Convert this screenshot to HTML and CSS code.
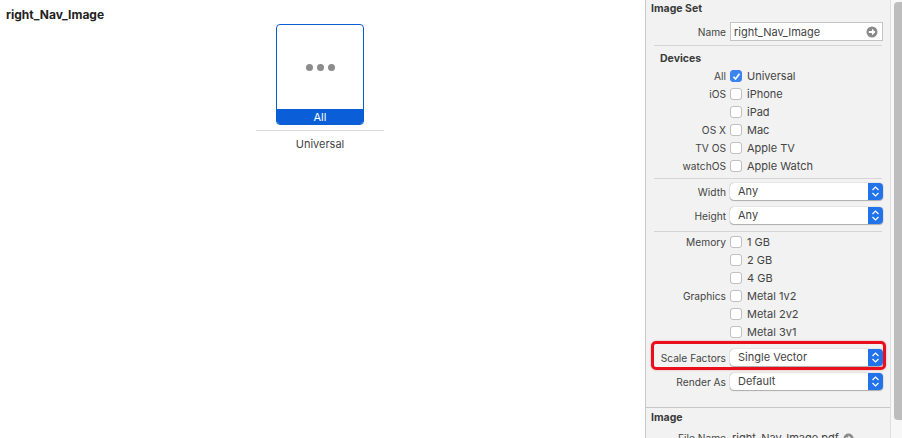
FILE: index.html
```html
<!DOCTYPE html>
<html lang="en">
<head>
    <meta charset="UTF-8">
    <meta name="viewport" content="width=device-width, initial-scale=1.0">
    <title>right_Nav_Image</title>
    <link rel="stylesheet" href="styles.css">
</head>
<body>
    <div class="canvas">
        <h1 class="set-title">right_Nav_Image</h1>
        <div class="slot-group">
            <div class="slot">
                <div class="slot-well">
                    <span class="dot"></span><span class="dot"></span><span class="dot"></span>
                </div>
                <div class="slot-tag">All</div>
            </div>
            <div class="slot-rule"></div>
            <div class="slot-name">Universal</div>
        </div>
    </div>

    <div class="inspector">
        <div class="panel">
            <h2 class="panel-title">Image Set</h2>
            <div class="row name-row">
                <span class="label">Name</span>
                <div class="text-field">
                    <span>right_Nav_Image</span>
                    <svg class="go-icon" width="12" height="12" viewBox="0 0 12 12">
                        <circle cx="6" cy="6" r="5.5" fill="#8a8a8a"/>
                        <path d="M2.8 5h3.2V2.8L9.4 6 6 9.2V7H2.8z" fill="#fff"/>
                    </svg>
                </div>
            </div>
            <hr class="rule">

            <h3 class="group-title">Devices</h3>
            <div class="row check-row first-check">
                <span class="label">All</span>
                <span class="check checked">
                    <svg width="9" height="9" viewBox="0 0 9 9"><path d="M1.5 4.8l2 2.2 4-5.2" fill="none" stroke="#fff" stroke-width="1.6"/></svg>
                </span>
                <span class="check-text">Universal</span>
            </div>
            <div class="row check-row"><span class="label">iOS</span><span class="check"></span><span class="check-text">iPhone</span></div>
            <div class="row check-row"><span class="label"></span><span class="check"></span><span class="check-text">iPad</span></div>
            <div class="row check-row"><span class="label">OS X</span><span class="check"></span><span class="check-text">Mac</span></div>
            <div class="row check-row"><span class="label">TV OS</span><span class="check"></span><span class="check-text">Apple TV</span></div>
            <div class="row check-row"><span class="label">watchOS</span><span class="check"></span><span class="check-text">Apple Watch</span></div>
            <hr class="rule rule-devices">

            <div class="row select-row">
                <span class="label">Width</span>
                <div class="select"><span class="select-value">Any</span><span class="stepper"><svg width="9" height="13" viewBox="0 0 9 13"><path d="M1.5 5L4.5 2l3 3M1.5 8l3 3 3-3" fill="none" stroke="#fff" stroke-width="1.2"/></svg></span></div>
            </div>
            <div class="row select-row gap-row">
                <span class="label">Height</span>
                <div class="select"><span class="select-value">Any</span><span class="stepper"><svg width="9" height="13" viewBox="0 0 9 13"><path d="M1.5 5L4.5 2l3 3M1.5 8l3 3 3-3" fill="none" stroke="#fff" stroke-width="1.2"/></svg></span></div>
            </div>
            <hr class="rule rule-size">

            <div class="row check-row first-memory"><span class="label">Memory</span><span class="check"></span><span class="check-text">1 GB</span></div>
            <div class="row check-row"><span class="label"></span><span class="check"></span><span class="check-text">2 GB</span></div>
            <div class="row check-row"><span class="label"></span><span class="check"></span><span class="check-text">4 GB</span></div>
            <div class="row check-row"><span class="label">Graphics</span><span class="check"></span><span class="check-text">Metal 1v2</span></div>
            <div class="row check-row"><span class="label"></span><span class="check"></span><span class="check-text">Metal 2v2</span></div>
            <div class="row check-row"><span class="label"></span><span class="check"></span><span class="check-text">Metal 3v1</span></div>

            <div class="row select-row scale-row">
                <span class="label">Scale Factors</span>
                <div class="select"><span class="select-value">Single Vector</span><span class="stepper"><svg width="9" height="13" viewBox="0 0 9 13"><path d="M1.5 5L4.5 2l3 3M1.5 8l3 3 3-3" fill="none" stroke="#fff" stroke-width="1.2"/></svg></span></div>
                <div class="callout"></div>
            </div>
            <div class="row select-row gap-row">
                <span class="label">Render As</span>
                <div class="select"><span class="select-value">Default</span><span class="stepper"><svg width="9" height="13" viewBox="0 0 9 13"><path d="M1.5 5L4.5 2l3 3M1.5 8l3 3 3-3" fill="none" stroke="#fff" stroke-width="1.2"/></svg></span></div>
            </div>

            <div class="image-section">
                <h2 class="panel-title">Image</h2>
                <div class="row file-row">
                    <span class="label">File Name</span>
                    <span class="file-name">right_Nav_Image.pdf</span>
                    <svg class="go-icon" width="11" height="11" viewBox="0 0 12 12">
                        <circle cx="6" cy="6" r="5.5" fill="#8a8a8a"/>
                        <path d="M2.8 5h3.2V2.8L9.4 6 6 9.2V7H2.8z" fill="#fff"/>
                    </svg>
                </div>
            </div>
        </div>
        <div class="scroll-track"><div class="scroll-thumb"></div></div>
    </div>
</body>
</html>
```

FILE: styles.css
```css
html, body {
    height: 100%;
}

body {
    display: flex;
    margin: 0;
    overflow: hidden;
    background-color: #fff;
    color: #3a3a3a;
    font-family: 'Inter', 'Liberation Sans', sans-serif;
    font-size: 11px;
}

.canvas {
    flex: 0 0 645px;
    position: relative;
}

.set-title {
    margin: 8px 0 0 6px;
    font-size: 12px;
    line-height: 14px;
    font-weight: 700;
    color: #222;
}

.slot-group {
    width: 128px;
    margin: 2px 0 0 256px;
}

.slot {
    width: 88px;
    height: 101px;
    margin: 0 auto;
    border: 1px solid #0a5fd0;
    border-radius: 4px;
    overflow: hidden;
    display: flex;
    flex-direction: column;
    box-sizing: border-box;
}

.slot-well {
    flex: 1;
    display: flex;
    align-items: center;
    justify-content: center;
    gap: 4px;
}

.dot {
    width: 7px;
    height: 7px;
    border-radius: 50%;
    background-color: #8c8c8c;
}

.slot-tag {
    height: 15px;
    line-height: 16px;
    text-align: center;
    background-color: #0a5fd8;
    color: #fff;
    font-size: 11px;
}

.slot-rule {
    height: 1px;
    margin-top: 5px;
    background-color: #dcdcdc;
}

.slot-name {
    margin-top: 7px;
    text-align: center;
    line-height: 13px;
    color: #444;
}

.inspector {
    flex: 1;
    display: flex;
    min-width: 0;
    border-left: 1px solid #c8c8c8;
    background-color: #f2f2f2;
}

.panel {
    flex: 1;
    min-width: 0;
    overflow: hidden;
    border-right: 1px solid #dedede;
}

.panel-title {
    margin: 2px 0 0 5px;
    font-size: 10.5px;
    line-height: 13px;
    font-weight: 700;
    color: #3a3a3a;
}

.group-title {
    margin: 6px 0 0 14px;
    font-size: 10.5px;
    line-height: 13px;
    font-weight: 700;
    color: #3a3a3a;
}

.row {
    display: flex;
    align-items: center;
}

.label {
    flex: 0 0 80px;
    font-size: 10.2px;
    text-align: right;
    white-space: nowrap;
    color: #444;
}

.name-row {
    margin-top: 7px;
    height: 19px;
}

.text-field {
    flex: 0 0 153px;
    height: 19px;
    margin-left: 4px;
    padding: 0 4px 0 3px;
    box-sizing: border-box;
    display: flex;
    align-items: center;
    justify-content: space-between;
    background-color: #fff;
    border: 1px solid #c4c4c4;
    color: #444;
}

.rule {
    height: 1px;
    margin: 4px 8px 0 8px;
    border: 0;
    background-color: #d4d4d4;
}

.check-row {
    height: 18px;
}

.first-check {
    margin-top: 2px;
}

.check {
    flex: 0 0 12px;
    width: 12px;
    height: 12px;
    margin-left: 4px;
    box-sizing: border-box;
    border: 1px solid #c0c0c0;
    border-radius: 3px;
    background-color: #fff;
    display: flex;
    align-items: center;
    justify-content: center;
}

.checked {
    background-color: #3b84ee;
    border-color: #3b84ee;
}

.check-text {
    margin-left: 5px;
    color: #444;
}

.rule-devices {
    margin-top: 3px;
}

.select-row {
    height: 17px;
}

.rule-devices + .select-row {
    margin-top: 4px;
}

.gap-row {
    margin-top: 7px;
}

.select {
    flex: 0 0 153px;
    height: 17px;
    margin-left: 4px;
    box-sizing: border-box;
    display: flex;
    justify-content: space-between;
    background-color: #fff;
    border-radius: 4px;
    box-shadow: 0 0 1px rgba(0, 0, 0, 0.5), 0 1px 1px rgba(0, 0, 0, 0.25);
    overflow: hidden;
}

.select-value {
    padding-left: 8px;
    line-height: 17px;
    color: #444;
}

.stepper {
    width: 15px;
    display: flex;
    align-items: center;
    justify-content: center;
    background-color: #2272ea;
}

.rule-size {
    margin-top: 7px;
}

.first-memory {
    margin-top: 1px;
}

.scale-row {
    position: relative;
    margin-top: 8px;
}

.callout {
    position: absolute;
    left: 5px;
    top: -8px;
    width: 235px;
    height: 29px;
    box-sizing: border-box;
    border: 3px solid #ea0f1c;
    border-radius: 5px;
    box-shadow: 0 0 2px rgba(234, 15, 28, 0.4);
}

.image-section {
    margin-top: 17px;
    border-top: 1px solid #c8c8c8;
    padding-top: 1px;
}

.file-row {
    margin-top: 7px;
}

.file-name {
    margin-left: 6px;
    margin-right: 4px;
    color: #444;
}

.scroll-track {
    flex: 0 0 11px;
    padding: 2px 0 18px 3px;
    box-sizing: border-box;
    background-color: #f7f7f7;
}

.scroll-thumb {
    height: 100%;
    border-radius: 4px 0 0 4px;
    background-color: #bdbdbd;
}
```
